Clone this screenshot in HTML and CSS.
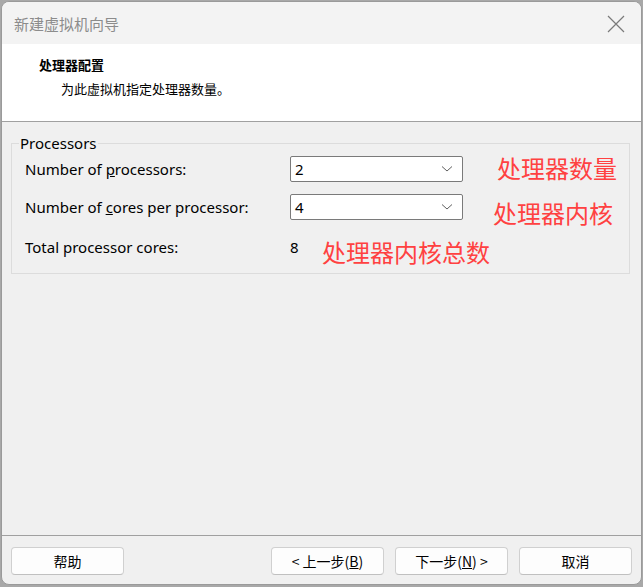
FILE: index.html
```html
<!DOCTYPE html>
<html lang="zh-CN">
<head>
<meta charset="utf-8">
<title>新建虚拟机向导</title>
<link rel="stylesheet" href="styles.css">
</head>
<body>
<div class="window">
  <div class="titlebar">
    <span class="title">新建虚拟机向导</span>
    <span class="close" aria-label="关闭">
      <svg width="18" height="18" viewBox="0 0 18 18"><path d="M1 1 L17 17 M17 1 L1 17" stroke="#7a7a7a" stroke-width="1.2" fill="none"/></svg>
    </span>
  </div>
  <div class="header">
    <div class="h-title">处理器配置</div>
    <div class="h-sub">为此虚拟机指定处理器数量。</div>
  </div>
  <div class="content">
    <div class="group">
      <span class="legend">Processors</span>
      <div class="row">
        <span class="label">Number of <u>p</u>rocessors:</span>
        <div class="combo"><span>2</span><svg class="chev" width="12" height="8" viewBox="0 0 12 8"><path d="M1 1.5 L6 6 L11 1.5" stroke="#606060" stroke-width="1" fill="none"/></svg></div>
        <span class="note note1">处理器数量</span>
      </div>
      <div class="row">
        <span class="label">Number of <u>c</u>ores per processor:</span>
        <div class="combo"><span>4</span><svg class="chev" width="12" height="8" viewBox="0 0 12 8"><path d="M1 1.5 L6 6 L11 1.5" stroke="#606060" stroke-width="1" fill="none"/></svg></div>
        <span class="note note2">处理器内核</span>
      </div>
      <div class="row row-total">
        <span class="label">Total processor cores:</span>
        <span class="value">8</span>
        <span class="note note3">处理器内核总数</span>
      </div>
    </div>
  </div>
  <div class="footer">
    <button class="btn">帮助</button>
    <div class="spacer"></div>
    <button class="btn">&lt; 上一步(<u>B</u>)</button>
    <button class="btn">下一步(<u>N</u>) &gt;</button>
    <button class="btn">取消</button>
  </div>
</div>
</body>
</html>
```
FILE: styles.css
```css
html, body {
  margin: 0;
  padding: 0;
}
body {
  background: #a8a8a8;
  width: 643px;
  height: 587px;
  overflow: hidden;
  font-family: "Noto Sans", "Noto Sans CJK SC", sans-serif;
}
.window {
  box-sizing: border-box;
  margin: 1px 0 0 1px;
  width: 641px;
  height: 584px;
  border: 1px solid #9a9a9a;
  border-radius: 8px;
  background: #f0f0f0;
  overflow: hidden;
  display: flex;
  flex-direction: column;
}
.titlebar {
  height: 42px;
  background: #f3f3f3;
  display: flex;
  align-items: center;
  justify-content: space-between;
  padding: 0 16px 0 12px;
  flex-shrink: 0;
}
.title {
  font-family: "Noto Sans CJK SC", sans-serif;
  font-size: 15px;
  color: #8c8c8c;
  padding-top: 1px;
}
.close {
  display: flex;
  margin-top: 1px;
}
.header {
  height: 78px;
  background: #ffffff;
  border-bottom: 1px solid #a0a0a0;
  flex-shrink: 0;
  box-sizing: border-box;
  padding: 12px 0 0 37px;
  font-family: "Noto Sans CJK SC", sans-serif;
  font-size: 13px;
  color: #000;
}
.h-title {
  font-weight: bold;
  line-height: 18px;
  height: 19px;
}
.h-sub {
  padding-left: 22px;
  line-height: 19px;
  margin-top: 4px;
}
.content {
  flex: 1;
  padding: 21px 11px 0 9px;
  border-bottom: 1px solid #a0a0a0;
}
.group {
  position: relative;
  border: 1px solid #dcdcdc;
  padding: 12px 0 13px 13px;
  display: flex;
  flex-direction: column;
  gap: 12px;
}
.legend {
  position: absolute;
  left: 7px;
  top: -11px;
  background: #f0f0f0;
  padding: 0 1px;
  font-size: 15px;
  line-height: 20px;
  color: #000;
}
.row {
  display: flex;
  align-items: center;
  height: 26px;
  font-size: 15px;
  color: #000;
}
.row-total {
  margin-top: 2px;
}
.label {
  width: 265px;
  flex-shrink: 0;
  white-space: nowrap;
}
.combo {
  box-sizing: border-box;
  width: 173px;
  height: 26px;
  background: #fff;
  border: 1px solid #7a7a7a;
  border-radius: 2px;
  display: flex;
  align-items: center;
  justify-content: space-between;
  padding: 0 9px 0 4px;
  flex-shrink: 0;
}
.value {
  width: 9px;
  flex-shrink: 0;
}
.note {
  font-family: "Noto Sans CJK SC", sans-serif;
  font-size: 24px;
  line-height: 26px;
  color: #ff4141;
  white-space: nowrap;
}
.note1 {
  margin-left: 34px;
  margin-top: -2px;
}
.note2 {
  margin-left: 30px;
  margin-top: 12px;
}
.note3 {
  margin-left: 23px;
  margin-top: 10px;
}
.footer {
  height: 48px;
  flex-shrink: 0;
  box-sizing: border-box;
  display: flex;
  align-items: flex-start;
  gap: 11px;
  padding: 11px 9px 0 9px;
}
.spacer {
  flex: 1;
}
.btn {
  width: 113px;
  height: 28px;
  box-sizing: border-box;
  background: #fdfdfd;
  border: 1px solid #d0d0d0;
  border-bottom-color: #c0c0c0;
  border-radius: 4px;
  font-family: "Noto Sans CJK SC", sans-serif;
  font-size: 14px;
  color: #000;
  padding: 0;
  margin: 0;
}
```
